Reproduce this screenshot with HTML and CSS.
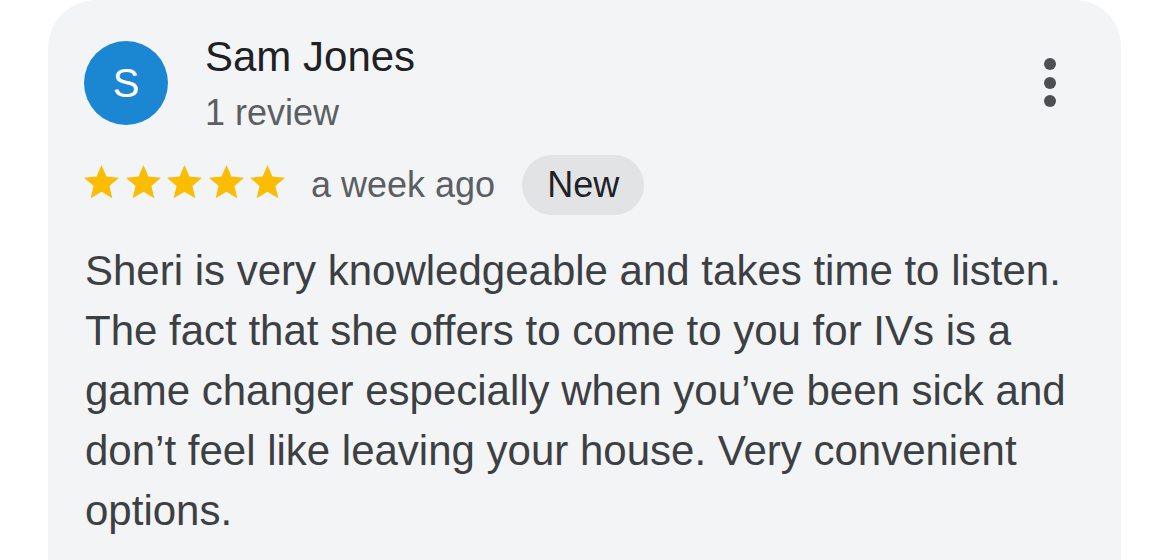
FILE: index.html
```html
<!DOCTYPE html>
<html lang="en">
<head>
<meta charset="utf-8">
<title>Review</title>
<link rel="stylesheet" href="styles.css">
</head>
<body>
<div class="card">
  <div class="header">
    <div class="avatar">S</div>
    <div class="who">
      <div class="name">Sam Jones</div>
      <div class="count">1 review</div>
    </div>
    <div class="kebab" aria-label="More options"><span></span><span></span><span></span></div>
  </div>
  <div class="meta">
    <div class="stars">
      <svg viewBox="2 2 20 19"><path d="M12 17.27L18.18 21l-1.64-7.03L22 9.24l-7.19-.61L12 2 9.19 8.63 2 9.24l5.46 4.73L5.82 21z"/></svg>
      <svg viewBox="2 2 20 19"><path d="M12 17.27L18.18 21l-1.64-7.03L22 9.24l-7.19-.61L12 2 9.19 8.63 2 9.24l5.46 4.73L5.82 21z"/></svg>
      <svg viewBox="2 2 20 19"><path d="M12 17.27L18.18 21l-1.64-7.03L22 9.24l-7.19-.61L12 2 9.19 8.63 2 9.24l5.46 4.73L5.82 21z"/></svg>
      <svg viewBox="2 2 20 19"><path d="M12 17.27L18.18 21l-1.64-7.03L22 9.24l-7.19-.61L12 2 9.19 8.63 2 9.24l5.46 4.73L5.82 21z"/></svg>
      <svg viewBox="2 2 20 19"><path d="M12 17.27L18.18 21l-1.64-7.03L22 9.24l-7.19-.61L12 2 9.19 8.63 2 9.24l5.46 4.73L5.82 21z"/></svg>
    </div>
    <span class="when">a week ago</span>
    <span class="badge">New</span>
  </div>
  <p class="text">Sheri is very knowledgeable and takes time to listen.<br>The fact that she offers to come to you for IVs is a<br>game changer especially when you’ve been sick and<br>don’t feel like leaving your house. Very convenient<br>options.</p>
</div>
</body>
</html>
```

FILE: styles.css
```css
html, body {
  margin: 0;
  padding: 0;
  background: #ffffff;
  overflow: hidden;
  height: 560px;
}

body {
  font-family: "Liberation Sans", Arial, sans-serif;
}

.card {
  margin-left: 48px;
  width: 1073px;
  height: 560px;
  box-sizing: border-box;
  background: #f3f4f6;
  border-radius: 48px 46px 0 0;
  padding: 33px 55px 0 36px;
}

.header {
  display: flex;
  align-items: flex-start;
}

.avatar {
  width: 84px;
  height: 84px;
  margin-top: 8px;
  border-radius: 50%;
  background: #1b87d2;
  color: #ffffff;
  font-size: 40px;
  line-height: 84px;
  text-align: center;
  flex: none;
}

.who {
  margin-left: 37px;
  display: flex;
  flex-direction: column;
  gap: 8px;
}

.name {
  font-size: 42px;
  line-height: 48px;
  color: #202124;
}

.count {
  font-size: 36px;
  line-height: 48px;
  color: #5b5e62;
}

.kebab {
  margin-left: auto;
  margin-right: 10px;
  margin-top: 25px;
  display: flex;
  flex-direction: column;
  gap: 6.5px;
}

.kebab span {
  width: 12px;
  height: 12px;
  border-radius: 50%;
  background: #4d4f53;
}

.meta {
  display: flex;
  align-items: center;
  margin-top: 18px;
  height: 60px;
}

.stars {
  display: flex;
  gap: 6.5px;
  margin-top: -6px;
}

.stars svg {
  width: 35px;
  height: 33.25px;
  fill: #fbbc04;
  display: block;
}

.when {
  margin-left: 26px;
  font-size: 36px;
  line-height: 48px;
  color: #5b5e62;
}

.badge {
  margin-left: 27px;
  height: 60px;
  padding: 0 25px;
  border-radius: 30px;
  background: #e2e3e5;
  color: #202124;
  font-size: 36px;
  line-height: 60px;
  font-weight: 500;
}

.text {
  margin: 26px 0 0 1px;
  font-size: 42px;
  line-height: 60px;
  color: #3c4043;
  white-space: nowrap;
}
```
